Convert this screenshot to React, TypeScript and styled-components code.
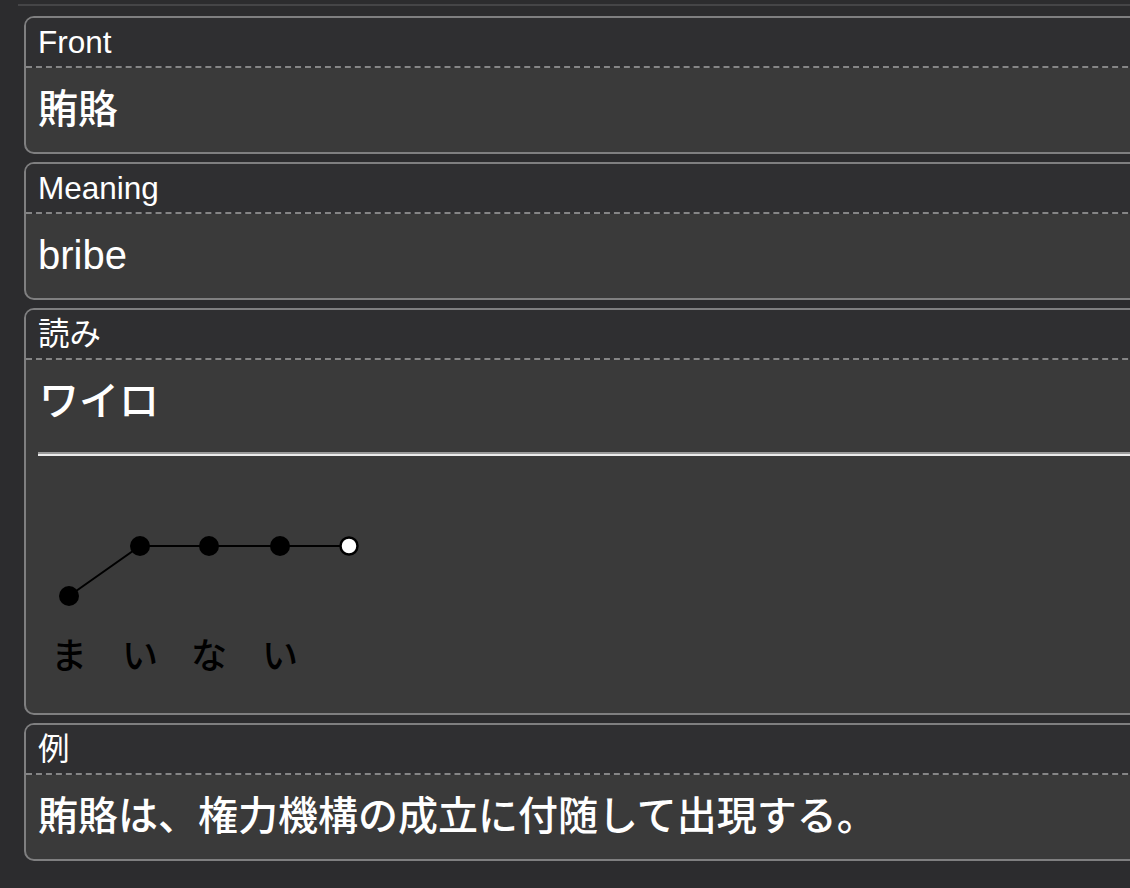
import React from "react";
import styled, { createGlobalStyle } from "styled-components";

const GlobalStyle = createGlobalStyle`
  html, body {
    margin: 0;
    padding: 0;
    background: #2c2c2e;
    overflow: hidden;
  }
  body {
    font-family: "Liberation Sans", "Noto Sans CJK JP", sans-serif;
    color: #ffffff;
  }
`;

const Page = styled.div`
  width: 1160px;
  padding-top: 4px;
`;

const TopRule = styled.div`
  margin-left: 18px;
  height: 2px;
  background: #454547;
`;

const CardList = styled.div`
  display: flex;
  flex-direction: column;
  gap: 8px;
  padding: 10px 0 0 24px;
`;

const Card = styled.section`
  border: 2px solid #7f7f80;
  border-radius: 10px;
  overflow: hidden;
  background: #3a3a3a;
`;

const CardHeader = styled.div`
  background: #2f2f31;
  border-bottom: 2px dashed #858586;
  padding: 6px 12px;
  font-size: 31.5px;
  line-height: 36px;
  height: 36px;
`;

const CardBody = styled.div`
  padding: 17px 12px 19px 12px;
  font-size: 40px;
  line-height: 48px;
  font-weight: 500;
`;

const Reading = styled.div`
  padding-left: 1px;
`;

const Divider = styled.div`
  margin-top: 27px;
  border-top: 2px solid #9a9a9a;
  border-bottom: 2px solid #ececec;
`;

const PitchSvg = styled.svg`
  display: block;
  margin-top: 10px;
  margin-bottom: -2px;
`;

type PitchProps = { mora: string[]; pattern: number[] };

const PitchGraph: React.FC<PitchProps> = ({ mora, pattern }) => {
  const xs = [31, 102, 171, 242, 311];
  const yOf = (h: number) => (h ? 80 : 130);
  const pts = pattern.map((h, i) => `${xs[i]},${yOf(h)}`).join(" ");
  return (
    <PitchSvg width={360} height={230} viewBox="0 0 360 230">
      <polyline points={pts} fill="none" stroke="#000" strokeWidth={2} />
      {pattern.map((h, i) =>
        i < mora.length ? (
          <circle key={i} cx={xs[i]} cy={yOf(h)} r={10} fill="#000" />
        ) : (
          <circle
            key={i}
            cx={xs[i]}
            cy={yOf(h)}
            r={8.5}
            fill="#fff"
            stroke="#000"
            strokeWidth={2.5}
          />
        )
      )}
      {mora.map((m, i) => (
        <text
          key={i}
          x={xs[i]}
          y={203}
          textAnchor="middle"
          fontSize={36}
          fontWeight={500}
          fill="#000"
          fontFamily='"Noto Sans CJK JP", sans-serif'
        >
          {m}
        </text>
      ))}
    </PitchSvg>
  );
};

export default function App() {
  return (
    <Page>
      <GlobalStyle />
      <TopRule />
      <CardList>
        <Card>
          <CardHeader>Front</CardHeader>
          <CardBody>賄賂</CardBody>
        </Card>
        <Card>
          <CardHeader>Meaning</CardHeader>
          <CardBody>bribe</CardBody>
        </Card>
        <Card>
          <CardHeader>読み</CardHeader>
          <CardBody>
            <Reading>ワイロ</Reading>
            <Divider />
            <PitchGraph mora={["ま", "い", "な", "い"]} pattern={[0, 1, 1, 1, 1]} />
          </CardBody>
        </Card>
        <Card>
          <CardHeader>例</CardHeader>
          <CardBody>賄賂は、権力機構の成立に付随して出現する。</CardBody>
        </Card>
      </CardList>
    </Page>
  );
}
